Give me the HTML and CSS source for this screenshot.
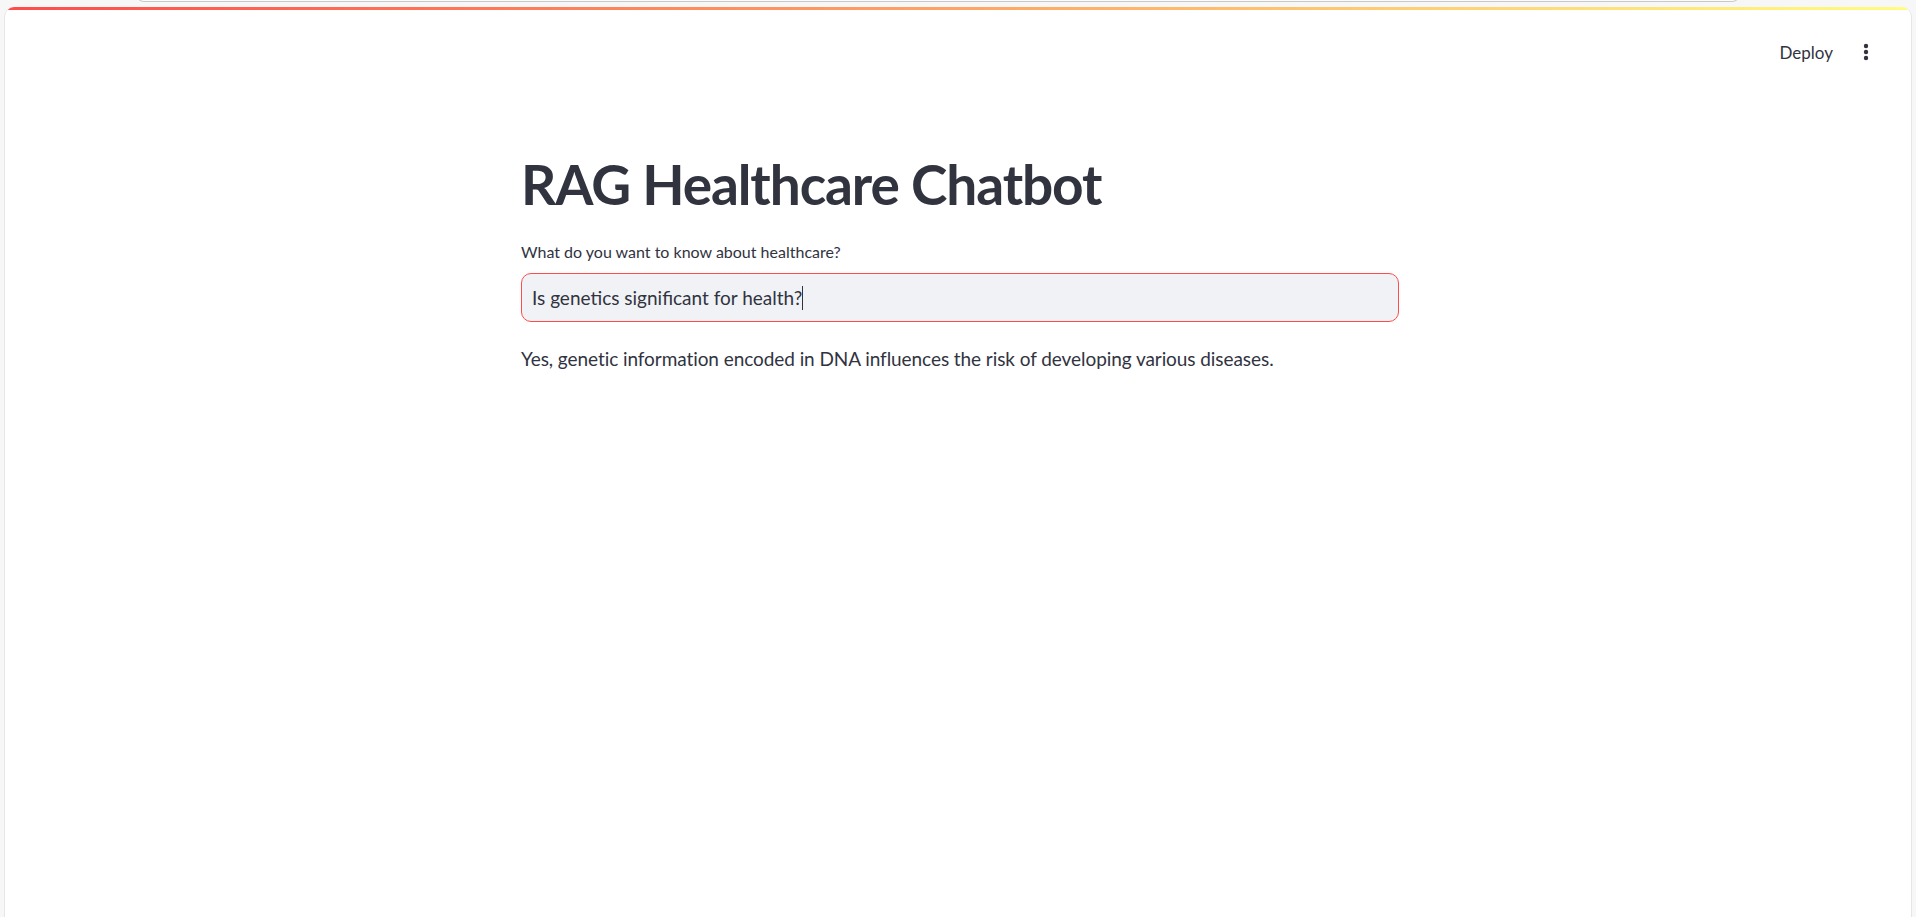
FILE: index.html
```html
<!DOCTYPE html>
<html lang="en">
<head>
<meta charset="utf-8">
<title>RAG Healthcare Chatbot</title>
<link rel="stylesheet" href="styles.css">
</head>
<body>
<div class="chrome-bar"></div>
<div class="frame">
  <div class="decoration"></div>
  <header class="app-header">
    <button class="deploy">Deploy</button>
    <button class="menu" aria-label="Main menu">
      <svg width="6" height="18" viewBox="0 0 6 18"><circle cx="3" cy="3" r="2.2" fill="#31333f"/><circle cx="3" cy="9" r="2.2" fill="#31333f"/><circle cx="3" cy="15" r="2.2" fill="#31333f"/></svg>
    </button>
  </header>
  <main class="main">
    <div class="block">
      <h1 class="title">RAG Healthcare Chatbot</h1>
      <label class="label" for="q">What do you want to know about healthcare?</label>
      <div class="input-wrap">
        <span class="input-text">Is genetics significant for health?</span><span class="caret"></span>
      </div>
      <p class="answer">Yes, genetic information encoded in DNA influences the risk of developing various diseases.</p>
    </div>
  </main>
</div>
</body>
</html>
```
FILE: styles.css
```css
html, body {
  margin: 0;
  padding: 0;
  height: 100%;
  overflow: hidden;
}
body {
  background: #f7f7f7;
  font-family: "Lato", "Noto Sans", sans-serif;
  color: #31333f;
  position: relative;
}
.chrome-bar {
  position: absolute;
  left: 136px;
  top: -6px;
  width: 1602px;
  height: 7px;
  background: #fbfbfb;
  border: 1px solid #c8c8c8;
  border-top: none;
  border-radius: 0 0 8px 8px;
}
.frame {
  margin: 7px 4px 0 4px;
  height: 910px;
  background: #ffffff;
  border-radius: 10px 10px 0 0;
  border-left: 1px solid #e6e6e6;
  border-right: 1px solid #e6e6e6;
  overflow: hidden;
}
.decoration {
  height: 3px;
  background: linear-gradient(90deg, #ff4b4b, #fffd80);
}
.app-header {
  display: flex;
  justify-content: flex-end;
  align-items: center;
  height: 60px;
  margin-top: 12px;
  padding-right: 38px;
  gap: 18px;
}
.deploy {
  background: none;
  border: none;
  font-family: "Lato", "Noto Sans", sans-serif;
  font-size: 17px;
  color: #31333f;
  padding: 0 8px;
}
.menu {
  background: none;
  border: none;
  padding: 0 4px;
  display: flex;
  align-items: center;
}
.main {
  display: flex;
  justify-content: center;
  padding-left: 4px;
}
.block {
  width: 878px;
  padding-top: 69px;
}
.title {
  margin: 0;
  font-size: 55px;
  font-weight: 700;
  line-height: 66px;
  letter-spacing: -1.1px;
  color: #31333f;
}
.label {
  display: block;
  margin-top: 24px;
  font-size: 16px;
  line-height: 22px;
  color: #31333f;
}
.input-wrap {
  margin-top: 10px;
  height: 47px;
  border: 1px solid #ff4b4b;
  border-radius: 10px;
  background: #f0f2f6;
  display: flex;
  align-items: center;
  padding-left: 10px;
}
.input-text {
  font-size: 19px;
  color: #31333f;
}
.caret {
  display: inline-block;
  width: 1px;
  height: 24px;
  background: #31333f;
}
.answer {
  margin: 23px 0 0 0;
  font-size: 19px;
  line-height: 28px;
  letter-spacing: -0.07px;
  color: #31333f;
}
```
